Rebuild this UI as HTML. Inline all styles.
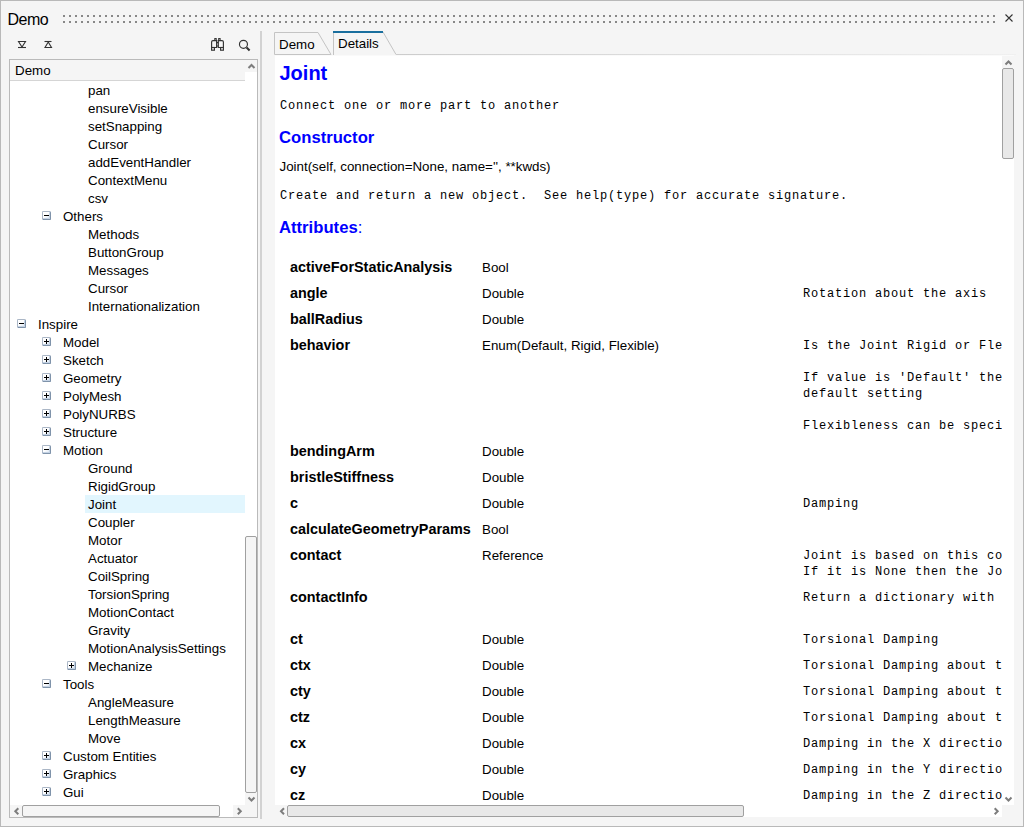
<!DOCTYPE html>
<html><head><meta charset="utf-8"><style>
html,body{margin:0;padding:0;width:1024px;height:827px;overflow:hidden;background:#f5f5f5;}
.t{position:absolute;white-space:nowrap;}
.exp{position:absolute;width:9px;height:9px;box-sizing:border-box;border:1px solid #7f93aa;border-left-color:#aab6c6;border-top-color:#aab6c6;border-radius:1.5px;background:linear-gradient(135deg,#ffffff 45%,#d3e0f0 100%);box-shadow:inset -1px -1px 0 #c5d3e4;}
.exp .mi{position:absolute;left:1px;top:3px;width:5px;height:1px;background:#000;}
.exp .pl{position:absolute;left:3px;top:1px;width:1px;height:5px;background:#000;}
</style></head><body>
<div style="position:absolute;left:0px;top:0px;width:1024px;height:827px;background:#f5f5f5;"></div><div style="position:absolute;left:0px;top:0px;width:1024px;height:1px;background:#b9b9b9;"></div><div style="position:absolute;left:0px;top:826px;width:1024px;height:1px;background:#b9b9b9;"></div><div style="position:absolute;left:0px;top:0px;width:1px;height:827px;background:#b9b9b9;"></div><div style="position:absolute;left:1023px;top:0px;width:1px;height:827px;background:#b9b9b9;"></div><div class="t" style="left:7.5px;top:8.46px;height:24px;line-height:24px;font-family:'Liberation Sans', sans-serif;font-size:16px;font-weight:normal;color:#000;letter-spacing:-0.5px;">Demo</div><svg style="position:absolute;left:0;top:0" width="1024" height="40"><g fill="#888"><rect x="63" y="15" width="2" height="2"/><rect x="63" y="21" width="2" height="2"/><rect x="69" y="15" width="2" height="2"/><rect x="69" y="21" width="2" height="2"/><rect x="75" y="15" width="2" height="2"/><rect x="75" y="21" width="2" height="2"/><rect x="81" y="15" width="2" height="2"/><rect x="81" y="21" width="2" height="2"/><rect x="87" y="15" width="2" height="2"/><rect x="87" y="21" width="2" height="2"/><rect x="93" y="15" width="2" height="2"/><rect x="93" y="21" width="2" height="2"/><rect x="99" y="15" width="2" height="2"/><rect x="99" y="21" width="2" height="2"/><rect x="105" y="15" width="2" height="2"/><rect x="105" y="21" width="2" height="2"/><rect x="111" y="15" width="2" height="2"/><rect x="111" y="21" width="2" height="2"/><rect x="117" y="15" width="2" height="2"/><rect x="117" y="21" width="2" height="2"/><rect x="123" y="15" width="2" height="2"/><rect x="123" y="21" width="2" height="2"/><rect x="129" y="15" width="2" height="2"/><rect x="129" y="21" width="2" height="2"/><rect x="135" y="15" width="2" height="2"/><rect x="135" y="21" width="2" height="2"/><rect x="141" y="15" width="2" height="2"/><rect x="141" y="21" width="2" height="2"/><rect x="147" y="15" width="2" height="2"/><rect x="147" y="21" width="2" height="2"/><rect x="153" y="15" width="2" height="2"/><rect x="153" y="21" width="2" height="2"/><rect x="159" y="15" width="2" height="2"/><rect x="159" y="21" width="2" height="2"/><rect x="165" y="15" width="2" height="2"/><rect x="165" y="21" width="2" height="2"/><rect x="171" y="15" width="2" height="2"/><rect x="171" y="21" width="2" height="2"/><rect x="177" y="15" width="2" height="2"/><rect x="177" y="21" width="2" height="2"/><rect x="183" y="15" width="2" height="2"/><rect x="183" y="21" width="2" height="2"/><rect x="189" y="15" width="2" height="2"/><rect x="189" y="21" width="2" height="2"/><rect x="195" y="15" width="2" height="2"/><rect x="195" y="21" width="2" height="2"/><rect x="201" y="15" width="2" height="2"/><rect x="201" y="21" width="2" height="2"/><rect x="207" y="15" width="2" height="2"/><rect x="207" y="21" width="2" height="2"/><rect x="213" y="15" width="2" height="2"/><rect x="213" y="21" width="2" height="2"/><rect x="219" y="15" width="2" height="2"/><rect x="219" y="21" width="2" height="2"/><rect x="225" y="15" width="2" height="2"/><rect x="225" y="21" width="2" height="2"/><rect x="231" y="15" width="2" height="2"/><rect x="231" y="21" width="2" height="2"/><rect x="237" y="15" width="2" height="2"/><rect x="237" y="21" width="2" height="2"/><rect x="243" y="15" width="2" height="2"/><rect x="243" y="21" width="2" height="2"/><rect x="249" y="15" width="2" height="2"/><rect x="249" y="21" width="2" height="2"/><rect x="255" y="15" width="2" height="2"/><rect x="255" y="21" width="2" height="2"/><rect x="261" y="15" width="2" height="2"/><rect x="261" y="21" width="2" height="2"/><rect x="267" y="15" width="2" height="2"/><rect x="267" y="21" width="2" height="2"/><rect x="273" y="15" width="2" height="2"/><rect x="273" y="21" width="2" height="2"/><rect x="279" y="15" width="2" height="2"/><rect x="279" y="21" width="2" height="2"/><rect x="285" y="15" width="2" height="2"/><rect x="285" y="21" width="2" height="2"/><rect x="291" y="15" width="2" height="2"/><rect x="291" y="21" width="2" height="2"/><rect x="297" y="15" width="2" height="2"/><rect x="297" y="21" width="2" height="2"/><rect x="303" y="15" width="2" height="2"/><rect x="303" y="21" width="2" height="2"/><rect x="309" y="15" width="2" height="2"/><rect x="309" y="21" width="2" height="2"/><rect x="315" y="15" width="2" height="2"/><rect x="315" y="21" width="2" height="2"/><rect x="321" y="15" width="2" height="2"/><rect x="321" y="21" width="2" height="2"/><rect x="327" y="15" width="2" height="2"/><rect x="327" y="21" width="2" height="2"/><rect x="333" y="15" width="2" height="2"/><rect x="333" y="21" width="2" height="2"/><rect x="339" y="15" width="2" height="2"/><rect x="339" y="21" width="2" height="2"/><rect x="345" y="15" width="2" height="2"/><rect x="345" y="21" width="2" height="2"/><rect x="351" y="15" width="2" height="2"/><rect x="351" y="21" width="2" height="2"/><rect x="357" y="15" width="2" height="2"/><rect x="357" y="21" width="2" height="2"/><rect x="363" y="15" width="2" height="2"/><rect x="363" y="21" width="2" height="2"/><rect x="369" y="15" width="2" height="2"/><rect x="369" y="21" width="2" height="2"/><rect x="375" y="15" width="2" height="2"/><rect x="375" y="21" width="2" height="2"/><rect x="381" y="15" width="2" height="2"/><rect x="381" y="21" width="2" height="2"/><rect x="387" y="15" width="2" height="2"/><rect x="387" y="21" width="2" height="2"/><rect x="393" y="15" width="2" height="2"/><rect x="393" y="21" width="2" height="2"/><rect x="399" y="15" width="2" height="2"/><rect x="399" y="21" width="2" height="2"/><rect x="405" y="15" width="2" height="2"/><rect x="405" y="21" width="2" height="2"/><rect x="411" y="15" width="2" height="2"/><rect x="411" y="21" width="2" height="2"/><rect x="417" y="15" width="2" height="2"/><rect x="417" y="21" width="2" height="2"/><rect x="423" y="15" width="2" height="2"/><rect x="423" y="21" width="2" height="2"/><rect x="429" y="15" width="2" height="2"/><rect x="429" y="21" width="2" height="2"/><rect x="435" y="15" width="2" height="2"/><rect x="435" y="21" width="2" height="2"/><rect x="441" y="15" width="2" height="2"/><rect x="441" y="21" width="2" height="2"/><rect x="447" y="15" width="2" height="2"/><rect x="447" y="21" width="2" height="2"/><rect x="453" y="15" width="2" height="2"/><rect x="453" y="21" width="2" height="2"/><rect x="459" y="15" width="2" height="2"/><rect x="459" y="21" width="2" height="2"/><rect x="465" y="15" width="2" height="2"/><rect x="465" y="21" width="2" height="2"/><rect x="471" y="15" width="2" height="2"/><rect x="471" y="21" width="2" height="2"/><rect x="477" y="15" width="2" height="2"/><rect x="477" y="21" width="2" height="2"/><rect x="483" y="15" width="2" height="2"/><rect x="483" y="21" width="2" height="2"/><rect x="489" y="15" width="2" height="2"/><rect x="489" y="21" width="2" height="2"/><rect x="495" y="15" width="2" height="2"/><rect x="495" y="21" width="2" height="2"/><rect x="501" y="15" width="2" height="2"/><rect x="501" y="21" width="2" height="2"/><rect x="507" y="15" width="2" height="2"/><rect x="507" y="21" width="2" height="2"/><rect x="513" y="15" width="2" height="2"/><rect x="513" y="21" width="2" height="2"/><rect x="519" y="15" width="2" height="2"/><rect x="519" y="21" width="2" height="2"/><rect x="525" y="15" width="2" height="2"/><rect x="525" y="21" width="2" height="2"/><rect x="531" y="15" width="2" height="2"/><rect x="531" y="21" width="2" height="2"/><rect x="537" y="15" width="2" height="2"/><rect x="537" y="21" width="2" height="2"/><rect x="543" y="15" width="2" height="2"/><rect x="543" y="21" width="2" height="2"/><rect x="549" y="15" width="2" height="2"/><rect x="549" y="21" width="2" height="2"/><rect x="555" y="15" width="2" height="2"/><rect x="555" y="21" width="2" height="2"/><rect x="561" y="15" width="2" height="2"/><rect x="561" y="21" width="2" height="2"/><rect x="567" y="15" width="2" height="2"/><rect x="567" y="21" width="2" height="2"/><rect x="573" y="15" width="2" height="2"/><rect x="573" y="21" width="2" height="2"/><rect x="579" y="15" width="2" height="2"/><rect x="579" y="21" width="2" height="2"/><rect x="585" y="15" width="2" height="2"/><rect x="585" y="21" width="2" height="2"/><rect x="591" y="15" width="2" height="2"/><rect x="591" y="21" width="2" height="2"/><rect x="597" y="15" width="2" height="2"/><rect x="597" y="21" width="2" height="2"/><rect x="603" y="15" width="2" height="2"/><rect x="603" y="21" width="2" height="2"/><rect x="609" y="15" width="2" height="2"/><rect x="609" y="21" width="2" height="2"/><rect x="615" y="15" width="2" height="2"/><rect x="615" y="21" width="2" height="2"/><rect x="621" y="15" width="2" height="2"/><rect x="621" y="21" width="2" height="2"/><rect x="627" y="15" width="2" height="2"/><rect x="627" y="21" width="2" height="2"/><rect x="633" y="15" width="2" height="2"/><rect x="633" y="21" width="2" height="2"/><rect x="639" y="15" width="2" height="2"/><rect x="639" y="21" width="2" height="2"/><rect x="645" y="15" width="2" height="2"/><rect x="645" y="21" width="2" height="2"/><rect x="651" y="15" width="2" height="2"/><rect x="651" y="21" width="2" height="2"/><rect x="657" y="15" width="2" height="2"/><rect x="657" y="21" width="2" height="2"/><rect x="663" y="15" width="2" height="2"/><rect x="663" y="21" width="2" height="2"/><rect x="669" y="15" width="2" height="2"/><rect x="669" y="21" width="2" height="2"/><rect x="675" y="15" width="2" height="2"/><rect x="675" y="21" width="2" height="2"/><rect x="681" y="15" width="2" height="2"/><rect x="681" y="21" width="2" height="2"/><rect x="687" y="15" width="2" height="2"/><rect x="687" y="21" width="2" height="2"/><rect x="693" y="15" width="2" height="2"/><rect x="693" y="21" width="2" height="2"/><rect x="699" y="15" width="2" height="2"/><rect x="699" y="21" width="2" height="2"/><rect x="705" y="15" width="2" height="2"/><rect x="705" y="21" width="2" height="2"/><rect x="711" y="15" width="2" height="2"/><rect x="711" y="21" width="2" height="2"/><rect x="717" y="15" width="2" height="2"/><rect x="717" y="21" width="2" height="2"/><rect x="723" y="15" width="2" height="2"/><rect x="723" y="21" width="2" height="2"/><rect x="729" y="15" width="2" height="2"/><rect x="729" y="21" width="2" height="2"/><rect x="735" y="15" width="2" height="2"/><rect x="735" y="21" width="2" height="2"/><rect x="741" y="15" width="2" height="2"/><rect x="741" y="21" width="2" height="2"/><rect x="747" y="15" width="2" height="2"/><rect x="747" y="21" width="2" height="2"/><rect x="753" y="15" width="2" height="2"/><rect x="753" y="21" width="2" height="2"/><rect x="759" y="15" width="2" height="2"/><rect x="759" y="21" width="2" height="2"/><rect x="765" y="15" width="2" height="2"/><rect x="765" y="21" width="2" height="2"/><rect x="771" y="15" width="2" height="2"/><rect x="771" y="21" width="2" height="2"/><rect x="777" y="15" width="2" height="2"/><rect x="777" y="21" width="2" height="2"/><rect x="783" y="15" width="2" height="2"/><rect x="783" y="21" width="2" height="2"/><rect x="789" y="15" width="2" height="2"/><rect x="789" y="21" width="2" height="2"/><rect x="795" y="15" width="2" height="2"/><rect x="795" y="21" width="2" height="2"/><rect x="801" y="15" width="2" height="2"/><rect x="801" y="21" width="2" height="2"/><rect x="807" y="15" width="2" height="2"/><rect x="807" y="21" width="2" height="2"/><rect x="813" y="15" width="2" height="2"/><rect x="813" y="21" width="2" height="2"/><rect x="819" y="15" width="2" height="2"/><rect x="819" y="21" width="2" height="2"/><rect x="825" y="15" width="2" height="2"/><rect x="825" y="21" width="2" height="2"/><rect x="831" y="15" width="2" height="2"/><rect x="831" y="21" width="2" height="2"/><rect x="837" y="15" width="2" height="2"/><rect x="837" y="21" width="2" height="2"/><rect x="843" y="15" width="2" height="2"/><rect x="843" y="21" width="2" height="2"/><rect x="849" y="15" width="2" height="2"/><rect x="849" y="21" width="2" height="2"/><rect x="855" y="15" width="2" height="2"/><rect x="855" y="21" width="2" height="2"/><rect x="861" y="15" width="2" height="2"/><rect x="861" y="21" width="2" height="2"/><rect x="867" y="15" width="2" height="2"/><rect x="867" y="21" width="2" height="2"/><rect x="873" y="15" width="2" height="2"/><rect x="873" y="21" width="2" height="2"/><rect x="879" y="15" width="2" height="2"/><rect x="879" y="21" width="2" height="2"/><rect x="885" y="15" width="2" height="2"/><rect x="885" y="21" width="2" height="2"/><rect x="891" y="15" width="2" height="2"/><rect x="891" y="21" width="2" height="2"/><rect x="897" y="15" width="2" height="2"/><rect x="897" y="21" width="2" height="2"/><rect x="903" y="15" width="2" height="2"/><rect x="903" y="21" width="2" height="2"/><rect x="909" y="15" width="2" height="2"/><rect x="909" y="21" width="2" height="2"/><rect x="915" y="15" width="2" height="2"/><rect x="915" y="21" width="2" height="2"/><rect x="921" y="15" width="2" height="2"/><rect x="921" y="21" width="2" height="2"/><rect x="927" y="15" width="2" height="2"/><rect x="927" y="21" width="2" height="2"/><rect x="933" y="15" width="2" height="2"/><rect x="933" y="21" width="2" height="2"/><rect x="939" y="15" width="2" height="2"/><rect x="939" y="21" width="2" height="2"/><rect x="945" y="15" width="2" height="2"/><rect x="945" y="21" width="2" height="2"/><rect x="951" y="15" width="2" height="2"/><rect x="951" y="21" width="2" height="2"/><rect x="957" y="15" width="2" height="2"/><rect x="957" y="21" width="2" height="2"/><rect x="963" y="15" width="2" height="2"/><rect x="963" y="21" width="2" height="2"/><rect x="969" y="15" width="2" height="2"/><rect x="969" y="21" width="2" height="2"/><rect x="975" y="15" width="2" height="2"/><rect x="975" y="21" width="2" height="2"/><rect x="981" y="15" width="2" height="2"/><rect x="981" y="21" width="2" height="2"/><rect x="987" y="15" width="2" height="2"/><rect x="987" y="21" width="2" height="2"/><rect x="993" y="15" width="2" height="2"/><rect x="993" y="21" width="2" height="2"/></g><path d="M1005.5 14.5 L1012.5 21.5 M1012.5 14.5 L1005.5 21.5" stroke="#333" stroke-width="1.1" fill="none"/></svg><svg style="position:absolute;left:0;top:30px" width="270" height="28">
<g fill="none" stroke="#333" stroke-width="1.1">
<path d="M18.5 11.5 H25.5 L22 17 Z"/><path d="M18 17.5 H26"/>
<path d="M44.5 11.5 H51.5"/><path d="M45 17.5 H51.5 L48.25 12 Z"/>
</g>
<g fill="none" stroke="#333" stroke-width="1.15">
<rect x="214.85" y="8.6" width="1.3" height="1.6"/><rect x="218.75" y="8.6" width="1.3" height="1.6"/>
<path d="M211.6 17.5 V12 Q211.6 10.6 213 10.6 H216.6 V17.5 Z"/><path d="M218.3 17.5 V10.6 H222 Q223.4 10.6 223.4 12 V17.5 Z"/>
<rect x="211.6" y="17.5" width="2.8" height="2.7"/><rect x="220.6" y="17.5" width="2.8" height="2.7"/>
<path d="M216.6 12.6 H218.3 M216.6 16 H218.3"/>
<circle cx="243.45" cy="14.3" r="4.0"/>
</g>
<path d="M246.6 17.5 L249.6 20.5" stroke="#333" stroke-width="2"/>
</svg><div style="position:absolute;left:9px;top:59px;width:249px;height:759px;background:#fff;border:1px solid #bababa;box-sizing:border-box;"></div><div style="position:absolute;left:10px;top:60px;width:235px;height:20px;background:#f5f5f5;border-bottom:1px solid #d5d5d5;"></div><div class="t" style="left:15px;top:61.38px;height:20px;line-height:20px;font-family:'Liberation Sans', sans-serif;font-size:13.33px;font-weight:normal;color:#000;">Demo</div><div style="position:absolute;left:245px;top:60px;width:12px;height:12px;background:#f5f5f5;"></div><div style="position:absolute;left:85px;top:495px;width:160px;height:18px;background:#e2f6fe;"></div><div style="position:absolute;left:10px;top:81px;width:235px;height:724px;overflow:hidden"></div><div class="t" style="left:88px;top:81.38px;height:20px;line-height:20px;font-family:'Liberation Sans', sans-serif;font-size:13.33px;font-weight:normal;color:#000;">pan</div><div class="t" style="left:88px;top:99.38px;height:20px;line-height:20px;font-family:'Liberation Sans', sans-serif;font-size:13.33px;font-weight:normal;color:#000;">ensureVisible</div><div class="t" style="left:88px;top:117.38px;height:20px;line-height:20px;font-family:'Liberation Sans', sans-serif;font-size:13.33px;font-weight:normal;color:#000;">setSnapping</div><div class="t" style="left:88px;top:135.38px;height:20px;line-height:20px;font-family:'Liberation Sans', sans-serif;font-size:13.33px;font-weight:normal;color:#000;">Cursor</div><div class="t" style="left:88px;top:153.38px;height:20px;line-height:20px;font-family:'Liberation Sans', sans-serif;font-size:13.33px;font-weight:normal;color:#000;">addEventHandler</div><div class="t" style="left:88px;top:171.38px;height:20px;line-height:20px;font-family:'Liberation Sans', sans-serif;font-size:13.33px;font-weight:normal;color:#000;">ContextMenu</div><div class="t" style="left:88px;top:189.38px;height:20px;line-height:20px;font-family:'Liberation Sans', sans-serif;font-size:13.33px;font-weight:normal;color:#000;">csv</div><div class="exp" style="left:42px;top:211px"><div class="mi"></div></div><div class="t" style="left:63px;top:207.38px;height:20px;line-height:20px;font-family:'Liberation Sans', sans-serif;font-size:13.33px;font-weight:normal;color:#000;">Others</div><div class="t" style="left:88px;top:225.38px;height:20px;line-height:20px;font-family:'Liberation Sans', sans-serif;font-size:13.33px;font-weight:normal;color:#000;">Methods</div><div class="t" style="left:88px;top:243.38px;height:20px;line-height:20px;font-family:'Liberation Sans', sans-serif;font-size:13.33px;font-weight:normal;color:#000;">ButtonGroup</div><div class="t" style="left:88px;top:261.38px;height:20px;line-height:20px;font-family:'Liberation Sans', sans-serif;font-size:13.33px;font-weight:normal;color:#000;">Messages</div><div class="t" style="left:88px;top:279.38px;height:20px;line-height:20px;font-family:'Liberation Sans', sans-serif;font-size:13.33px;font-weight:normal;color:#000;">Cursor</div><div class="t" style="left:88px;top:297.38px;height:20px;line-height:20px;font-family:'Liberation Sans', sans-serif;font-size:13.33px;font-weight:normal;color:#000;">Internationalization</div><div class="exp" style="left:17px;top:319px"><div class="mi"></div></div><div class="t" style="left:38px;top:315.38px;height:20px;line-height:20px;font-family:'Liberation Sans', sans-serif;font-size:13.33px;font-weight:normal;color:#000;">Inspire</div><div class="exp" style="left:42px;top:337px"><div class="mi"></div><div class="pl"></div></div><div class="t" style="left:63px;top:333.38px;height:20px;line-height:20px;font-family:'Liberation Sans', sans-serif;font-size:13.33px;font-weight:normal;color:#000;">Model</div><div class="exp" style="left:42px;top:355px"><div class="mi"></div><div class="pl"></div></div><div class="t" style="left:63px;top:351.38px;height:20px;line-height:20px;font-family:'Liberation Sans', sans-serif;font-size:13.33px;font-weight:normal;color:#000;">Sketch</div><div class="exp" style="left:42px;top:373px"><div class="mi"></div><div class="pl"></div></div><div class="t" style="left:63px;top:369.38px;height:20px;line-height:20px;font-family:'Liberation Sans', sans-serif;font-size:13.33px;font-weight:normal;color:#000;">Geometry</div><div class="exp" style="left:42px;top:391px"><div class="mi"></div><div class="pl"></div></div><div class="t" style="left:63px;top:387.38px;height:20px;line-height:20px;font-family:'Liberation Sans', sans-serif;font-size:13.33px;font-weight:normal;color:#000;">PolyMesh</div><div class="exp" style="left:42px;top:409px"><div class="mi"></div><div class="pl"></div></div><div class="t" style="left:63px;top:405.38px;height:20px;line-height:20px;font-family:'Liberation Sans', sans-serif;font-size:13.33px;font-weight:normal;color:#000;">PolyNURBS</div><div class="exp" style="left:42px;top:427px"><div class="mi"></div><div class="pl"></div></div><div class="t" style="left:63px;top:423.38px;height:20px;line-height:20px;font-family:'Liberation Sans', sans-serif;font-size:13.33px;font-weight:normal;color:#000;">Structure</div><div class="exp" style="left:42px;top:445px"><div class="mi"></div></div><div class="t" style="left:63px;top:441.38px;height:20px;line-height:20px;font-family:'Liberation Sans', sans-serif;font-size:13.33px;font-weight:normal;color:#000;">Motion</div><div class="t" style="left:88px;top:459.38px;height:20px;line-height:20px;font-family:'Liberation Sans', sans-serif;font-size:13.33px;font-weight:normal;color:#000;">Ground</div><div class="t" style="left:88px;top:477.38px;height:20px;line-height:20px;font-family:'Liberation Sans', sans-serif;font-size:13.33px;font-weight:normal;color:#000;">RigidGroup</div><div class="t" style="left:88px;top:495.38px;height:20px;line-height:20px;font-family:'Liberation Sans', sans-serif;font-size:13.33px;font-weight:normal;color:#000;">Joint</div><div class="t" style="left:88px;top:513.38px;height:20px;line-height:20px;font-family:'Liberation Sans', sans-serif;font-size:13.33px;font-weight:normal;color:#000;">Coupler</div><div class="t" style="left:88px;top:531.38px;height:20px;line-height:20px;font-family:'Liberation Sans', sans-serif;font-size:13.33px;font-weight:normal;color:#000;">Motor</div><div class="t" style="left:88px;top:549.38px;height:20px;line-height:20px;font-family:'Liberation Sans', sans-serif;font-size:13.33px;font-weight:normal;color:#000;">Actuator</div><div class="t" style="left:88px;top:567.38px;height:20px;line-height:20px;font-family:'Liberation Sans', sans-serif;font-size:13.33px;font-weight:normal;color:#000;">CoilSpring</div><div class="t" style="left:88px;top:585.38px;height:20px;line-height:20px;font-family:'Liberation Sans', sans-serif;font-size:13.33px;font-weight:normal;color:#000;">TorsionSpring</div><div class="t" style="left:88px;top:603.38px;height:20px;line-height:20px;font-family:'Liberation Sans', sans-serif;font-size:13.33px;font-weight:normal;color:#000;">MotionContact</div><div class="t" style="left:88px;top:621.38px;height:20px;line-height:20px;font-family:'Liberation Sans', sans-serif;font-size:13.33px;font-weight:normal;color:#000;">Gravity</div><div class="t" style="left:88px;top:639.38px;height:20px;line-height:20px;font-family:'Liberation Sans', sans-serif;font-size:13.33px;font-weight:normal;color:#000;">MotionAnalysisSettings</div><div class="exp" style="left:67px;top:661px"><div class="mi"></div><div class="pl"></div></div><div class="t" style="left:88px;top:657.38px;height:20px;line-height:20px;font-family:'Liberation Sans', sans-serif;font-size:13.33px;font-weight:normal;color:#000;">Mechanize</div><div class="exp" style="left:42px;top:679px"><div class="mi"></div></div><div class="t" style="left:63px;top:675.38px;height:20px;line-height:20px;font-family:'Liberation Sans', sans-serif;font-size:13.33px;font-weight:normal;color:#000;">Tools</div><div class="t" style="left:88px;top:693.38px;height:20px;line-height:20px;font-family:'Liberation Sans', sans-serif;font-size:13.33px;font-weight:normal;color:#000;">AngleMeasure</div><div class="t" style="left:88px;top:711.38px;height:20px;line-height:20px;font-family:'Liberation Sans', sans-serif;font-size:13.33px;font-weight:normal;color:#000;">LengthMeasure</div><div class="t" style="left:88px;top:729.38px;height:20px;line-height:20px;font-family:'Liberation Sans', sans-serif;font-size:13.33px;font-weight:normal;color:#000;">Move</div><div class="exp" style="left:42px;top:751px"><div class="mi"></div><div class="pl"></div></div><div class="t" style="left:63px;top:747.38px;height:20px;line-height:20px;font-family:'Liberation Sans', sans-serif;font-size:13.33px;font-weight:normal;color:#000;">Custom Entities</div><div class="exp" style="left:42px;top:769px"><div class="mi"></div><div class="pl"></div></div><div class="t" style="left:63px;top:765.38px;height:20px;line-height:20px;font-family:'Liberation Sans', sans-serif;font-size:13.33px;font-weight:normal;color:#000;">Graphics</div><div class="exp" style="left:42px;top:787px"><div class="mi"></div><div class="pl"></div></div><div class="t" style="left:63px;top:783.38px;height:20px;line-height:20px;font-family:'Liberation Sans', sans-serif;font-size:13.33px;font-weight:normal;color:#000;">Gui</div><div style="position:absolute;left:245px;top:536px;width:12px;height:257px;background:#f5f5f5;border:1px solid #a0a0a0;border-radius:2px;box-sizing:border-box;"></div><div style="position:absolute;left:245px;top:793px;width:12px;height:12px;background:#f5f5f5;"></div><div style="position:absolute;left:10px;top:805px;width:12px;height:12px;background:#f5f5f5;"></div><div style="position:absolute;left:233px;top:805px;width:24px;height:12px;background:#f5f5f5;"></div><div style="position:absolute;left:22px;top:805px;width:198px;height:12px;background:#f5f5f5;border:1px solid #a0a0a0;border-radius:2px;box-sizing:border-box;"></div><svg style="position:absolute;left:0;top:0" width="270" height="827"><g fill="none" stroke="#7d7d7d" stroke-width="2">
<path d="M248.5 68 L251.5 65 L254.5 68"/>
<path d="M248.5 797.5 L251.5 800.5 L254.5 797.5"/>
<path d="M18.3 808.3 L15.3 811.3 L18.3 814.3"/>
<path d="M237.8 808.3 L240.8 811.3 L237.8 814.3"/>
</g></svg><div style="position:absolute;left:260px;top:31px;width:2px;height:788px;background:#d2d2d2;"></div><svg style="position:absolute;left:0;top:0" width="1024" height="60">
<path d="M274.5 54.5 V32.5 H318 L331 54.5 Z" fill="#f5f5f5" stroke="#c4c4c4" stroke-width="1"/>
<defs><linearGradient id="tl" x1="0" x2="1" y1="0" y2="0"><stop offset="0" stop-color="#cccccc"/><stop offset="0.4" stop-color="#dcdcdc"/><stop offset="1" stop-color="#f0f0f0"/></linearGradient></defs>
<path d="M333.5 56 V32 H383 L396 54.5" fill="#f5f5f5" stroke="#c4c4c4" stroke-width="1"/>
<rect x="396" y="54" width="620" height="1" fill="url(#tl)"/>
<rect x="275" y="55" width="739" height="1" fill="#fafafa"/>
<rect x="333" y="31" width="50" height="2" fill="#1a6f9e"/>
</svg><div class="t" style="left:279px;top:34.88px;height:20px;line-height:20px;font-family:'Liberation Sans', sans-serif;font-size:13.33px;font-weight:normal;color:#000;">Demo</div><div class="t" style="left:338px;top:33.88px;height:20px;line-height:20px;font-family:'Liberation Sans', sans-serif;font-size:13.33px;font-weight:normal;color:#000;">Details</div><div style="position:absolute;left:275px;top:56px;width:739px;height:761px;background:#fff;"></div><div style="position:absolute;left:1002px;top:56px;width:12px;height:12px;background:#f5f5f5;"></div><div style="position:absolute;left:1002px;top:68px;width:12px;height:91px;background:#e8e8e8;border:1px solid #a0a0a0;border-radius:2px;box-sizing:border-box;"></div><div style="position:absolute;left:1002px;top:805px;width:12px;height:12px;background:#f5f5f5;"></div><div style="position:absolute;left:275px;top:805px;width:12px;height:12px;background:#f5f5f5;"></div><div style="position:absolute;left:287px;top:805px;width:457px;height:12px;background:#e8e8e8;border:1px solid #a0a0a0;border-radius:2px;box-sizing:border-box;"></div><svg style="position:absolute;left:0;top:0" width="1024" height="827"><g fill="none" stroke="#7d7d7d" stroke-width="2">
<path d="M1005.5 64.5 L1008.5 61.5 L1011.5 64.5"/>
<path d="M1005.5 797.5 L1008.5 800.5 L1011.5 797.5"/>
<path d="M284 808.3 L281 811.3 L284 814.3"/>
<path d="M994.7 808.3 L997.7 811.3 L994.7 814.3"/>
</g></svg><div style="position:absolute;left:275px;top:56px;width:727px;height:749px;overflow:hidden"><div class="t" style="left:4.5px;top:2.07px;height:30px;line-height:30px;font-family:'Liberation Sans', sans-serif;font-size:20px;font-weight:bold;color:#0000ff;">Joint</div><div class="t" style="left:5px;top:40.80px;height:18px;line-height:18px;font-family:'Liberation Mono', monospace;font-size:12px;font-weight:normal;color:#000;letter-spacing:0.8px;">Connect one or more part to another</div><div class="t" style="left:4px;top:68.72px;height:25px;line-height:25px;font-family:'Liberation Sans', sans-serif;font-size:16.67px;font-weight:bold;color:#0000ff;">Constructor</div><div class="t" style="left:4.5px;top:101.38px;height:20px;line-height:20px;font-family:'Liberation Sans', sans-serif;font-size:13.33px;font-weight:normal;color:#000;">Joint(self, connection=None, name='', **kwds)</div><div class="t" style="left:5px;top:130.80px;height:18px;line-height:18px;font-family:'Liberation Mono', monospace;font-size:12px;font-weight:normal;color:#000;white-space:pre;letter-spacing:0.8px;">Create and return a new object.  See help(type) for accurate signature.</div><div class="t" style="left:4px;top:158.72px;height:25px;line-height:25px;font-family:'Liberation Sans', sans-serif;font-size:16.67px;font-weight:normal;color:#0000ff;"><b>Attributes</b>:</div><div class="t" style="left:15px;top:200.01px;height:22px;line-height:22px;font-family:'Liberation Sans', sans-serif;font-size:14.4px;font-weight:bold;color:#000;">activeForStaticAnalysis</div><div class="t" style="left:207px;top:202.38px;height:20px;line-height:20px;font-family:'Liberation Sans', sans-serif;font-size:13.33px;font-weight:normal;color:#000;">Bool</div><div class="t" style="left:15px;top:226.01px;height:22px;line-height:22px;font-family:'Liberation Sans', sans-serif;font-size:14.4px;font-weight:bold;color:#000;">angle</div><div class="t" style="left:207px;top:228.38px;height:20px;line-height:20px;font-family:'Liberation Sans', sans-serif;font-size:13.33px;font-weight:normal;color:#000;">Double</div><div class="t" style="left:528px;top:228.80px;height:18px;line-height:18px;font-family:'Liberation Mono', monospace;font-size:12px;font-weight:normal;color:#000;white-space:pre;letter-spacing:0.8px;">Rotation about the axis</div><div class="t" style="left:15px;top:252.01px;height:22px;line-height:22px;font-family:'Liberation Sans', sans-serif;font-size:14.4px;font-weight:bold;color:#000;">ballRadius</div><div class="t" style="left:207px;top:254.38px;height:20px;line-height:20px;font-family:'Liberation Sans', sans-serif;font-size:13.33px;font-weight:normal;color:#000;">Double</div><div class="t" style="left:15px;top:278.01px;height:22px;line-height:22px;font-family:'Liberation Sans', sans-serif;font-size:14.4px;font-weight:bold;color:#000;">behavior</div><div class="t" style="left:207px;top:280.38px;height:20px;line-height:20px;font-family:'Liberation Sans', sans-serif;font-size:13.33px;font-weight:normal;color:#000;">Enum(Default, Rigid, Flexible)</div><div class="t" style="left:528px;top:280.80px;height:18px;line-height:18px;font-family:'Liberation Mono', monospace;font-size:12px;font-weight:normal;color:#000;white-space:pre;letter-spacing:0.8px;">Is the Joint Rigid or Flexible</div><div class="t" style="left:528px;top:312.80px;height:18px;line-height:18px;font-family:'Liberation Mono', monospace;font-size:12px;font-weight:normal;color:#000;white-space:pre;letter-spacing:0.8px;">If value is 'Default' the Joint uses the</div><div class="t" style="left:528px;top:328.80px;height:18px;line-height:18px;font-family:'Liberation Mono', monospace;font-size:12px;font-weight:normal;color:#000;white-space:pre;letter-spacing:0.8px;">default setting</div><div class="t" style="left:528px;top:360.80px;height:18px;line-height:18px;font-family:'Liberation Mono', monospace;font-size:12px;font-weight:normal;color:#000;white-space:pre;letter-spacing:0.8px;">Flexibleness can be specified</div><div class="t" style="left:15px;top:384.01px;height:22px;line-height:22px;font-family:'Liberation Sans', sans-serif;font-size:14.4px;font-weight:bold;color:#000;">bendingArm</div><div class="t" style="left:207px;top:386.38px;height:20px;line-height:20px;font-family:'Liberation Sans', sans-serif;font-size:13.33px;font-weight:normal;color:#000;">Double</div><div class="t" style="left:15px;top:410.01px;height:22px;line-height:22px;font-family:'Liberation Sans', sans-serif;font-size:14.4px;font-weight:bold;color:#000;">bristleStiffness</div><div class="t" style="left:207px;top:412.38px;height:20px;line-height:20px;font-family:'Liberation Sans', sans-serif;font-size:13.33px;font-weight:normal;color:#000;">Double</div><div class="t" style="left:15px;top:436.01px;height:22px;line-height:22px;font-family:'Liberation Sans', sans-serif;font-size:14.4px;font-weight:bold;color:#000;">c</div><div class="t" style="left:207px;top:438.38px;height:20px;line-height:20px;font-family:'Liberation Sans', sans-serif;font-size:13.33px;font-weight:normal;color:#000;">Double</div><div class="t" style="left:528px;top:438.80px;height:18px;line-height:18px;font-family:'Liberation Mono', monospace;font-size:12px;font-weight:normal;color:#000;white-space:pre;letter-spacing:0.8px;">Damping</div><div class="t" style="left:15px;top:462.01px;height:22px;line-height:22px;font-family:'Liberation Sans', sans-serif;font-size:14.4px;font-weight:bold;color:#000;">calculateGeometryParams</div><div class="t" style="left:207px;top:464.38px;height:20px;line-height:20px;font-family:'Liberation Sans', sans-serif;font-size:13.33px;font-weight:normal;color:#000;">Bool</div><div class="t" style="left:15px;top:488.01px;height:22px;line-height:22px;font-family:'Liberation Sans', sans-serif;font-size:14.4px;font-weight:bold;color:#000;">contact</div><div class="t" style="left:207px;top:490.38px;height:20px;line-height:20px;font-family:'Liberation Sans', sans-serif;font-size:13.33px;font-weight:normal;color:#000;">Reference</div><div class="t" style="left:528px;top:490.80px;height:18px;line-height:18px;font-family:'Liberation Mono', monospace;font-size:12px;font-weight:normal;color:#000;white-space:pre;letter-spacing:0.8px;">Joint is based on this contact</div><div class="t" style="left:528px;top:506.80px;height:18px;line-height:18px;font-family:'Liberation Mono', monospace;font-size:12px;font-weight:normal;color:#000;white-space:pre;letter-spacing:0.8px;">If it is None then the Joint is</div><div class="t" style="left:15px;top:530.01px;height:22px;line-height:22px;font-family:'Liberation Sans', sans-serif;font-size:14.4px;font-weight:bold;color:#000;">contactInfo</div><div class="t" style="left:528px;top:532.80px;height:18px;line-height:18px;font-family:'Liberation Mono', monospace;font-size:12px;font-weight:normal;color:#000;white-space:pre;letter-spacing:0.8px;">Return a dictionary with contact info</div><div class="t" style="left:15px;top:572.01px;height:22px;line-height:22px;font-family:'Liberation Sans', sans-serif;font-size:14.4px;font-weight:bold;color:#000;">ct</div><div class="t" style="left:207px;top:574.38px;height:20px;line-height:20px;font-family:'Liberation Sans', sans-serif;font-size:13.33px;font-weight:normal;color:#000;">Double</div><div class="t" style="left:528px;top:574.80px;height:18px;line-height:18px;font-family:'Liberation Mono', monospace;font-size:12px;font-weight:normal;color:#000;white-space:pre;letter-spacing:0.8px;">Torsional Damping</div><div class="t" style="left:15px;top:598.01px;height:22px;line-height:22px;font-family:'Liberation Sans', sans-serif;font-size:14.4px;font-weight:bold;color:#000;">ctx</div><div class="t" style="left:207px;top:600.38px;height:20px;line-height:20px;font-family:'Liberation Sans', sans-serif;font-size:13.33px;font-weight:normal;color:#000;">Double</div><div class="t" style="left:528px;top:600.80px;height:18px;line-height:18px;font-family:'Liberation Mono', monospace;font-size:12px;font-weight:normal;color:#000;white-space:pre;letter-spacing:0.8px;">Torsional Damping about the X</div><div class="t" style="left:15px;top:624.01px;height:22px;line-height:22px;font-family:'Liberation Sans', sans-serif;font-size:14.4px;font-weight:bold;color:#000;">cty</div><div class="t" style="left:207px;top:626.38px;height:20px;line-height:20px;font-family:'Liberation Sans', sans-serif;font-size:13.33px;font-weight:normal;color:#000;">Double</div><div class="t" style="left:528px;top:626.80px;height:18px;line-height:18px;font-family:'Liberation Mono', monospace;font-size:12px;font-weight:normal;color:#000;white-space:pre;letter-spacing:0.8px;">Torsional Damping about the Y</div><div class="t" style="left:15px;top:650.01px;height:22px;line-height:22px;font-family:'Liberation Sans', sans-serif;font-size:14.4px;font-weight:bold;color:#000;">ctz</div><div class="t" style="left:207px;top:652.38px;height:20px;line-height:20px;font-family:'Liberation Sans', sans-serif;font-size:13.33px;font-weight:normal;color:#000;">Double</div><div class="t" style="left:528px;top:652.80px;height:18px;line-height:18px;font-family:'Liberation Mono', monospace;font-size:12px;font-weight:normal;color:#000;white-space:pre;letter-spacing:0.8px;">Torsional Damping about the Z</div><div class="t" style="left:15px;top:676.01px;height:22px;line-height:22px;font-family:'Liberation Sans', sans-serif;font-size:14.4px;font-weight:bold;color:#000;">cx</div><div class="t" style="left:207px;top:678.38px;height:20px;line-height:20px;font-family:'Liberation Sans', sans-serif;font-size:13.33px;font-weight:normal;color:#000;">Double</div><div class="t" style="left:528px;top:678.80px;height:18px;line-height:18px;font-family:'Liberation Mono', monospace;font-size:12px;font-weight:normal;color:#000;white-space:pre;letter-spacing:0.8px;">Damping in the X direction</div><div class="t" style="left:15px;top:702.01px;height:22px;line-height:22px;font-family:'Liberation Sans', sans-serif;font-size:14.4px;font-weight:bold;color:#000;">cy</div><div class="t" style="left:207px;top:704.38px;height:20px;line-height:20px;font-family:'Liberation Sans', sans-serif;font-size:13.33px;font-weight:normal;color:#000;">Double</div><div class="t" style="left:528px;top:704.80px;height:18px;line-height:18px;font-family:'Liberation Mono', monospace;font-size:12px;font-weight:normal;color:#000;white-space:pre;letter-spacing:0.8px;">Damping in the Y direction</div><div class="t" style="left:15px;top:728.01px;height:22px;line-height:22px;font-family:'Liberation Sans', sans-serif;font-size:14.4px;font-weight:bold;color:#000;">cz</div><div class="t" style="left:207px;top:730.38px;height:20px;line-height:20px;font-family:'Liberation Sans', sans-serif;font-size:13.33px;font-weight:normal;color:#000;">Double</div><div class="t" style="left:528px;top:730.80px;height:18px;line-height:18px;font-family:'Liberation Mono', monospace;font-size:12px;font-weight:normal;color:#000;white-space:pre;letter-spacing:0.8px;">Damping in the Z direction</div></div>
</body></html>
